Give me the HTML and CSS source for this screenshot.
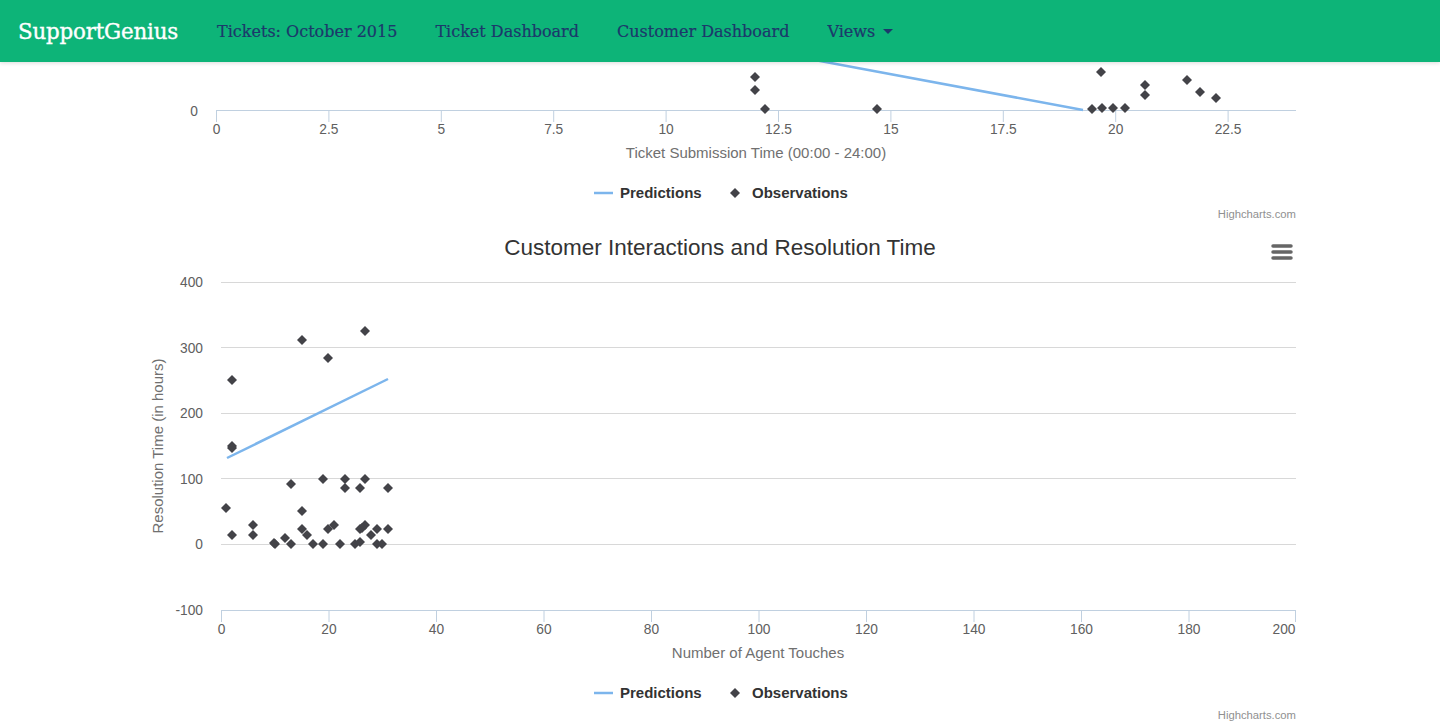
FILE: index.html
```html
<!DOCTYPE html>
<html>
<head>
<meta charset="utf-8">
<title>SupportGenius</title>
<link rel="stylesheet" href="styles.css">
</head>
<body>
<nav class="navbar">
  <a class="brand" href="#">SupportGenius</a>
  <ul class="nav">
    <li><a href="#">Tickets: October 2015</a></li>
    <li><a href="#">Ticket Dashboard</a></li>
    <li><a href="#">Customer Dashboard</a></li>
    <li><a href="#">Views <span class="caret"></span></a></li>
  </ul>
</nav>
<main class="content">
  <div class="chart chart-top">
    <svg width="1440" height="160" viewBox="0 62 1440 160">
      <defs>
        <path id="dm" d="M0 -5 L5 0 L0 5 L-5 0 Z" class="obs"/>
      </defs>
      <line class="axis" x1="216" y1="110.5" x2="1296" y2="110.5"/>
      <g class="ticks">
        <line x1="216.5" y1="110" x2="216.5" y2="122"/>
        <line x1="328.9" y1="110" x2="328.9" y2="122"/>
        <line x1="441.3" y1="110" x2="441.3" y2="122"/>
        <line x1="553.7" y1="110" x2="553.7" y2="122"/>
        <line x1="666.1" y1="110" x2="666.1" y2="122"/>
        <line x1="778.5" y1="110" x2="778.5" y2="122"/>
        <line x1="890.9" y1="110" x2="890.9" y2="122"/>
        <line x1="1003.3" y1="110" x2="1003.3" y2="122"/>
        <line x1="1115.7" y1="110" x2="1115.7" y2="122"/>
        <line x1="1228.1" y1="110" x2="1228.1" y2="122"/>
      </g>
      <text class="tick" x="198" y="116" text-anchor="end">0</text>
      <g class="tick" text-anchor="middle">
        <text x="216.5" y="134">0</text>
        <text x="328.9" y="134">2.5</text>
        <text x="441.3" y="134">5</text>
        <text x="553.7" y="134">7.5</text>
        <text x="666.1" y="134">10</text>
        <text x="778.5" y="134">12.5</text>
        <text x="890.9" y="134">15</text>
        <text x="1003.3" y="134">17.5</text>
        <text x="1115.7" y="134">20</text>
        <text x="1228.1" y="134">22.5</text>
      </g>
      <text class="axis-title" x="756" y="158" text-anchor="middle">Ticket Submission Time (00:00 - 24:00)</text>
      <line class="pred" x1="1083" y1="110" x2="600" y2="20"/>
      <g>
        <use href="#dm" x="755" y="77"/>
        <use href="#dm" x="755" y="90"/>
        <use href="#dm" x="765" y="109"/>
        <use href="#dm" x="877" y="109"/>
        <use href="#dm" x="1092" y="109"/>
        <use href="#dm" x="1101" y="72"/>
        <use href="#dm" x="1102" y="108"/>
        <use href="#dm" x="1113" y="108"/>
        <use href="#dm" x="1125" y="108"/>
        <use href="#dm" x="1145" y="85"/>
        <use href="#dm" x="1145" y="95"/>
        <use href="#dm" x="1187" y="80"/>
        <use href="#dm" x="1200" y="92"/>
        <use href="#dm" x="1216" y="98"/>
      </g>
      <line class="pred" x1="594" y1="193" x2="613" y2="193"/>
      <text class="legend" x="620" y="198">Predictions</text>
      <use href="#dm" x="735" y="193"/>
      <text class="legend" x="752" y="198">Observations</text>
      <text class="credit" x="1296" y="218" text-anchor="end">Highcharts.com</text>
    </svg>
  </div>
  <div class="chart chart-bottom">
    <svg width="1440" height="500" viewBox="0 222 1440 500">
      <defs>
        <path id="dm2" d="M0 -5 L5 0 L0 5 L-5 0 Z" class="obs"/>
      </defs>
      <text class="title" x="720" y="255" text-anchor="middle">Customer Interactions and Resolution Time</text>
      <g class="menu">
        <line x1="1273" y1="246" x2="1291" y2="246"/>
        <line x1="1273" y1="252" x2="1291" y2="252"/>
        <line x1="1273" y1="258" x2="1291" y2="258"/>
      </g>
      <g class="grid">
        <line x1="221" y1="282.5" x2="1296" y2="282.5"/>
        <line x1="221" y1="347.5" x2="1296" y2="347.5"/>
        <line x1="221" y1="413.5" x2="1296" y2="413.5"/>
        <line x1="221" y1="478.5" x2="1296" y2="478.5"/>
        <line x1="221" y1="544.5" x2="1296" y2="544.5"/>
      </g>
      <line class="axis" x1="221" y1="610.5" x2="1296" y2="610.5"/>
      <g class="ticks">
        <line x1="221.5" y1="610" x2="221.5" y2="622"/>
        <line x1="329" y1="610" x2="329" y2="622"/>
        <line x1="436.5" y1="610" x2="436.5" y2="622"/>
        <line x1="544" y1="610" x2="544" y2="622"/>
        <line x1="651.5" y1="610" x2="651.5" y2="622"/>
        <line x1="759" y1="610" x2="759" y2="622"/>
        <line x1="866.5" y1="610" x2="866.5" y2="622"/>
        <line x1="974" y1="610" x2="974" y2="622"/>
        <line x1="1081.5" y1="610" x2="1081.5" y2="622"/>
        <line x1="1189" y1="610" x2="1189" y2="622"/>
        <line x1="1295.5" y1="610" x2="1295.5" y2="622"/>
      </g>
      <g class="tick" text-anchor="end">
        <text x="203" y="287">400</text>
        <text x="203" y="352.5">300</text>
        <text x="203" y="418">200</text>
        <text x="203" y="483.5">100</text>
        <text x="203" y="549">0</text>
        <text x="203" y="615">-100</text>
      </g>
      <g class="tick" text-anchor="middle">
        <text x="221.5" y="634">0</text>
        <text x="329" y="634">20</text>
        <text x="436.5" y="634">40</text>
        <text x="544" y="634">60</text>
        <text x="651.5" y="634">80</text>
        <text x="759" y="634">100</text>
        <text x="866.5" y="634">120</text>
        <text x="974" y="634">140</text>
        <text x="1081.5" y="634">160</text>
        <text x="1189" y="634">180</text>
        <text x="1284" y="634">200</text>
      </g>
      <text class="axis-title" x="163" y="446" text-anchor="middle" transform="rotate(-90 163 446)">Resolution Time (in hours)</text>
      <text class="axis-title" x="758" y="658" text-anchor="middle">Number of Agent Touches</text>
      <line class="pred" x1="227" y1="458" x2="388" y2="379"/>
      <g>
        <use href="#dm2" x="226" y="508"/>
        <use href="#dm2" x="232" y="380"/>
        <use href="#dm2" x="232" y="446"/>
        <use href="#dm2" x="232" y="448"/>
        <use href="#dm2" x="232" y="535"/>
        <use href="#dm2" x="253" y="525"/>
        <use href="#dm2" x="253" y="535"/>
        <use href="#dm2" x="274" y="543"/>
        <use href="#dm2" x="275" y="544"/>
        <use href="#dm2" x="285" y="538"/>
        <use href="#dm2" x="291" y="484"/>
        <use href="#dm2" x="291" y="544"/>
        <use href="#dm2" x="302" y="340"/>
        <use href="#dm2" x="302" y="511"/>
        <use href="#dm2" x="302" y="529"/>
        <use href="#dm2" x="307" y="535"/>
        <use href="#dm2" x="313" y="544"/>
        <use href="#dm2" x="323" y="479"/>
        <use href="#dm2" x="323" y="544"/>
        <use href="#dm2" x="328" y="358"/>
        <use href="#dm2" x="328" y="529"/>
        <use href="#dm2" x="334" y="525"/>
        <use href="#dm2" x="340" y="544"/>
        <use href="#dm2" x="345" y="479"/>
        <use href="#dm2" x="345" y="488"/>
        <use href="#dm2" x="355" y="544"/>
        <use href="#dm2" x="360" y="488"/>
        <use href="#dm2" x="360" y="529"/>
        <use href="#dm2" x="360" y="542"/>
        <use href="#dm2" x="365" y="331"/>
        <use href="#dm2" x="365" y="479"/>
        <use href="#dm2" x="365" y="525"/>
        <use href="#dm2" x="362" y="528"/>
        <use href="#dm2" x="371" y="535"/>
        <use href="#dm2" x="377" y="529"/>
        <use href="#dm2" x="377" y="544"/>
        <use href="#dm2" x="382" y="544"/>
        <use href="#dm2" x="388" y="488"/>
        <use href="#dm2" x="388" y="529"/>
      </g>
      <line class="pred" x1="594" y1="693" x2="613" y2="693"/>
      <text class="legend" x="620" y="698">Predictions</text>
      <use href="#dm2" x="735" y="693"/>
      <text class="legend" x="752" y="698">Observations</text>
      <text class="credit" x="1296" y="719" text-anchor="end">Highcharts.com</text>
    </svg>
  </div>
</main>
</body>
</html>
```
FILE: styles.css
```css
html, body {
  margin: 0;
  padding: 0;
  background: #fff;
  overflow: hidden;
}
body {
  width: 1440px;
  height: 722px;
  font-family: "Liberation Sans", Arial, sans-serif;
}
.navbar {
  position: relative;
  z-index: 10;
  height: 62px;
  background: #0db478;
  display: flex;
  align-items: center;
  padding-left: 18px;
  box-shadow: 0 1px 4px rgba(0, 0, 0, 0.15);
}
.brand {
  font-family: "DejaVu Serif", "Liberation Serif", serif;
  font-size: 21.4px;
  color: #fff;
  text-decoration: none;
  margin-right: 39px;
  letter-spacing: -0.2px;
  -webkit-text-stroke: 0.35px #fff;
}
.nav {
  list-style: none;
  margin: 0;
  padding: 0;
  display: flex;
  gap: 38px;
}
.nav a {
  font-family: "DejaVu Serif", "Liberation Serif", serif;
  font-size: 16px;
  color: #1c386b;
  text-decoration: none;
  display: flex;
  align-items: center;
  -webkit-text-stroke: 0.2px #1c386b;
}
.caret {
  display: inline-block;
  width: 0;
  height: 0;
  margin-left: 8px;
  border-top: 5px solid #1c386b;
  border-left: 5px solid transparent;
  border-right: 5px solid transparent;
}
.content {
  display: flex;
  flex-direction: column;
}
.chart svg {
  display: block;
}
.axis {
  stroke: #c0d0e0;
  stroke-width: 1;
}
.ticks line {
  stroke: #c0d0e0;
  stroke-width: 1;
}
.grid line {
  stroke: #d8d8d8;
  stroke-width: 1;
}
.tick {
  font-family: "Liberation Sans", Arial, sans-serif;
  font-size: 13.75px;
  fill: #606060;
}
.axis-title {
  font-family: "Liberation Sans", Arial, sans-serif;
  font-size: 15px;
  fill: #707070;
}
.title {
  font-family: "Liberation Sans", Arial, sans-serif;
  font-size: 22.5px;
  fill: #333333;
}
.legend {
  font-family: "Liberation Sans", Arial, sans-serif;
  font-size: 15px;
  font-weight: bold;
  fill: #333333;
}
.credit {
  font-family: "Liberation Sans", Arial, sans-serif;
  font-size: 11.25px;
  fill: #909090;
}
.pred {
  stroke: #7cb5ec;
  stroke-width: 2.5;
  fill: none;
}
.obs {
  fill: #434348;
}
.menu line {
  stroke: #666666;
  stroke-width: 3.5;
  stroke-linecap: round;
}
```
